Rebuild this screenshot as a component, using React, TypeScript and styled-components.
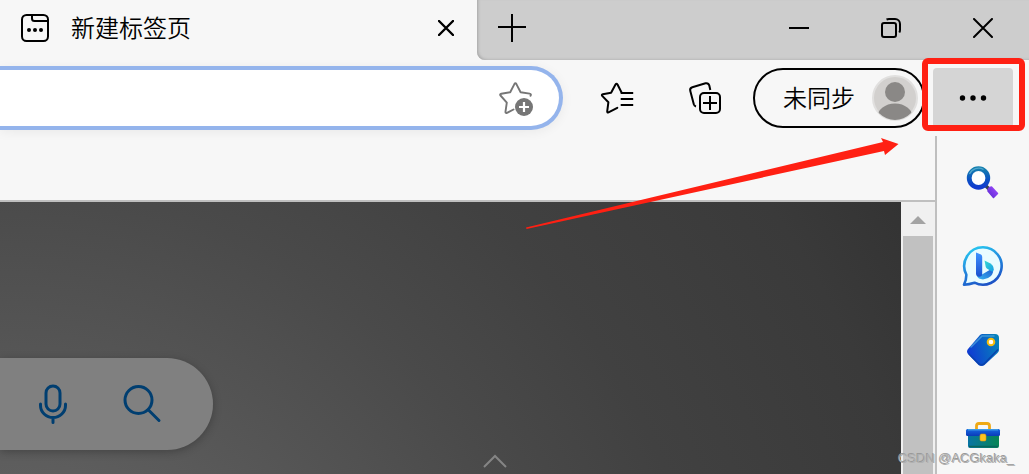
import React from "react";
import styled, { createGlobalStyle } from "styled-components";

const GlobalStyle = createGlobalStyle`
  * { box-sizing: border-box; }
  body { margin: 0; background: #f7f7f7; overflow: hidden; }
  button { font: inherit; color: inherit; background: none; border: 0; padding: 0; }
  svg { display: block; }
`;

const Browser = styled.div`
  position: relative;
  display: flex;
  flex-direction: column;
  height: 100vh;
  overflow: hidden;
  background: #f7f7f7;
  color: #000;
  font-family: "Noto Sans CJK SC", "Liberation Sans", sans-serif;
  font-size: 24px;
  font-weight: 350;
  line-height: 36px;
`;

const TabStrip = styled.header`
  display: flex;
  flex: none;
  height: 60px;
  background: #f7f7f7;
`;

const ActiveTab = styled.div`
  display: flex;
  align-items: center;
  flex: 0 1 477px;
  padding: 0 16px 4px 20px;
`;

const Label = styled.span`
  padding-bottom: 2px;
  white-space: nowrap;
`;

const TabTitle = styled(Label)`
  flex: 1;
  margin-left: 21px;
`;

const StripRest = styled.div`
  display: flex;
  align-items: center;
  flex: 1;
  padding: 0 0 4px 12px;
  background: #cdcdcd;
  border-bottom-left-radius: 8px;
  box-shadow: inset 2px -1px 3px -1px #a6a6a6;
`;

const WindowControls = styled.div`
  display: flex;
  margin-left: auto;
`;

const IconButton = styled.button<{ $width: number; $height?: number }>`
  display: flex;
  flex: none;
  align-items: center;
  justify-content: center;
  width: ${(p) => p.$width}px;
  height: ${(p) => p.$height ?? 46}px;
`;

const Toolbar = styled.div`
  display: flex;
  flex: none;
  align-items: center;
  height: 76px;
  padding-right: 16px;
`;

const AddressBar = styled.div`
  display: flex;
  align-items: center;
  flex: 1;
  height: 64px;
  padding-right: 21px;
  background: #fff;
  border: 4px solid #94b4ec;
  border-left: 0;
  border-radius: 0 32px 32px 0;
  box-shadow: 0 2px 12px rgba(0, 0, 0, 0.06);
`;

const AddressInput = styled.input`
  flex: 1;
  min-width: 0;
  height: 52px;
  padding: 0 20px;
  border: 0;
  outline: 0;
  background: transparent;
  font: inherit;
`;

const ToolbarActions = styled.div`
  display: flex;
  align-items: center;
  margin-left: 30px;
  gap: 40px;
`;

const ProfileButton = styled.button`
  display: flex;
  flex: none;
  align-items: center;
  justify-content: space-between;
  width: 172px;
  height: 60px;
  margin-left: 24px;
  padding: 0 5px 0 28px;
  border: 2px solid #000;
  border-radius: 30px;
`;

const MenuSlot = styled.div`
  position: relative;
  flex: none;
  margin-left: 8px;
`;

const MenuButton = styled(IconButton)`
  background: #d5d5d5;
  border-radius: 4px;
`;

const Highlight = styled.div`
  position: absolute;
  inset: -10px -12px -3px -11px;
  border: 6px solid #ff2013;
  border-radius: 6px;
  pointer-events: none;
`;

const Arrow = styled.svg`
  position: absolute;
  top: 136px;
  right: 129px;
  pointer-events: none;
`;

const Main = styled.div`
  display: flex;
  flex: 1;
  min-height: 0;
`;

const PageColumn = styled.div`
  display: flex;
  flex-direction: column;
  flex: 1;
  min-width: 0;
`;

const FavoritesBar = styled.div`
  flex: none;
  height: 66px;
  border-bottom: 2px solid #bfbfbf;
`;

const Viewport = styled.div`
  display: flex;
  flex: 1;
  min-height: 0;
`;

const NewTabPage = styled.main`
  display: flex;
  flex-direction: column;
  justify-content: space-between;
  flex: 1;
  padding-top: 156px;
  background: radial-gradient(circle at 0 200%, #5e5e5e 270px, #4a4a4a 560px, #414141 720px, #3a3a3a 940px, #333 1054px);
`;

const SearchBox = styled.form`
  display: flex;
  align-items: center;
  width: 213px;
  height: 92px;
  padding-left: 30px;
  gap: 43px;
  background: #808080;
  border-radius: 0 46px 46px 0;
  box-shadow: 0 2px 8px rgba(0, 0, 0, 0.25);
`;

const ExpandButton = styled.button`
  display: flex;
  align-self: center;
  margin-left: 88px;
  padding-bottom: 6px;
`;

const ScrollTrack = styled.div`
  display: flex;
  flex-direction: column;
  flex: none;
  width: 34px;
  padding: 0 2px;
  background: #f0f0f0;
`;

const ScrollUp = styled(IconButton)`
  padding-top: 2px;
`;

const ScrollThumb = styled.div`
  flex: 1;
  background: #c1c1c1;
`;

const Sidebar = styled.aside`
  display: flex;
  flex-direction: column;
  align-items: center;
  flex: none;
  width: 94px;
  padding-top: 4px;
  border-left: 2px solid #bfbfbf;
`;

const Watermark = styled.span`
  position: absolute;
  right: 14px;
  bottom: 7px;
  color: #b0b0b0;
  font-family: "Liberation Sans", Arial, sans-serif;
  font-size: 13px;
  font-weight: 400;
  line-height: 16px;
  text-shadow: -1px -1px 0 #999;
`;

const TabPageIcon = () => (
  <svg width="30" height="30" viewBox="0 0 30 30" fill="none" stroke="#000" strokeWidth="2">
    <rect x="2" y="2" width="26" height="26" rx="4.5" />
    <path d="M12 2v3.500a2.500 2.500 0 0 0 2.500 2.500H28" />
    <g fill="#000" stroke="none">
      <circle cx="9" cy="17" r="2" />
      <circle cx="15" cy="17" r="2" />
      <circle cx="21" cy="17" r="2" />
    </g>
  </svg>
);

const CloseIcon = ({ size, weight }: { size: number; weight: number }) => (
  <svg width={size} height={size} viewBox={`0 0 ${size} ${size}`} stroke="#000" strokeWidth={weight} strokeLinecap="round">
    <path d={`M1 1L${size - 1} ${size - 1}M${size - 1} 1L1 ${size - 1}`} />
  </svg>
);

const PlusIcon = () => (
  <svg width="28" height="28" viewBox="0 0 28 28" stroke="#000" strokeWidth="2">
    <path d="M14 0v28M0 13h28" />
  </svg>
);

const MinimizeIcon = () => (
  <svg width="20" height="20" viewBox="0 0 20 20" stroke="#000" strokeWidth="2">
    <path d="M0 10h20" />
  </svg>
);

const RestoreIcon = () => (
  <svg width="20" height="20" viewBox="0 0 20 20" fill="none" stroke="#000" strokeWidth="2">
    <rect x="1" y="5" width="14" height="14" rx="2" />
    <path d="M5.500 1.500Q6.500 1 8 1h6a5 5 0 0 1 5 5v6q0 1.500-.7 2.500" />
  </svg>
);

const AddFavoriteIcon = () => (
  <svg width="36" height="36" viewBox="0 0 36 36" fill="none">
    <path
      d="M15.500 29.500l-6.500 3.400q-1.700.6-1.500-1.300l1.300-9L2.500 15.500q-1-1.400.8-1.800l8.900-1.400 4.200-8.200q1-1.700 2 0l4.200 8.200 9 1.300q2 .4.900 2.200"
      stroke="#767676"
      strokeWidth="1.900"
      strokeLinejoin="round"
      strokeLinecap="round"
    />
    <circle cx="26" cy="27" r="9" fill="#767676" />
    <path d="M26 22v10M21 27h10" stroke="#fff" strokeWidth="2.200" />
  </svg>
);

const FavoritesIcon = () => (
  <svg width="34" height="34" viewBox="0 0 34 34" fill="none" stroke="#000" strokeWidth="2" strokeLinejoin="round" strokeLinecap="round">
    <path d="M17.300 26.800L8.500 31.400q-1.400.5-1.300-1l1.200-9.200-6.200-6.300q-.9-1.200.6-1.600l8.300-1.500L15.500 3.500q1-1.500 2 0l4.200 8.300" />
    <path d="M21.700 12h10.500M21.700 18h10.500M21.700 24h10.500" strokeLinecap="square" />
  </svg>
);

const CollectionsIcon = () => (
  <svg width="34" height="34" viewBox="0 0 34 34" fill="none" stroke="#000" strokeWidth="2">
    <rect x="12" y="12" width="20" height="20" rx="4" />
    <path d="M22 15v14M15 22h14" />
    <path d="M8 25.500q-1.700-.5-2.200-2.200L2.300 10q-.8-3 2-3.800L17.500 2.300q3-.6 3.800 2.200L22.300 9" />
  </svg>
);

const Avatar = () => (
  <svg width="46" height="46" viewBox="0 0 46 46">
    <defs>
      <clipPath id="avatar-clip">
        <circle cx="23" cy="23" r="22" />
      </clipPath>
    </defs>
    <circle cx="23" cy="23" r="22" fill="#d2d0ce" stroke="#e1e0df" strokeWidth="2" />
    <circle cx="23" cy="17" r="10" fill="#8a8886" />
    <ellipse cx="23" cy="43" rx="18" ry="14.500" fill="#8a8886" clipPath="url(#avatar-clip)" />
  </svg>
);

const MoreIcon = () => (
  <svg width="28" height="8" viewBox="0 0 28 8">
    <circle cx="3.500" cy="4" r="2.700" />
    <circle cx="14" cy="4" r="2.700" />
    <circle cx="24.500" cy="4" r="2.700" />
  </svg>
);

const MicIcon = () => (
  <svg width="46" height="42" viewBox="0 0 46 42" fill="none" stroke="#003e70" strokeWidth="3" strokeLinecap="round">
    <rect x="16" y="3" width="14" height="25" rx="7" />
    <path d="M10.500 21v1.500a12.500 12 0 0 0 25 0V21M23 35.500v4" />
  </svg>
);

const SearchIcon = () => (
  <svg width="40" height="42" viewBox="0 0 40 42" fill="none" stroke="#003e70" strokeWidth="3" strokeLinecap="round">
    <circle cx="16.500" cy="17" r="13.500" />
    <path d="M26.500 27l10.500 10.500" />
  </svg>
);

const SideSearchIcon = () => (
  <svg width="42" height="42" viewBox="0 0 42 42">
    <defs>
      <linearGradient id="lens" x1="0" y1="0" x2="0" y2="1">
        <stop offset="0" stopColor="#157fae" />
        <stop offset=".6" stopColor="#0b50c4" />
        <stop offset="1" stopColor="#123ccf" />
      </linearGradient>
      <linearGradient id="handle" x1="0" y1="1" x2="1" y2="0">
        <stop offset="0" stopColor="#5a28d0" />
        <stop offset="1" stopColor="#a04cff" />
      </linearGradient>
    </defs>
    <path d="M24 25l4 4" stroke="#34405c" strokeWidth="3.500" />
    <circle cx="16.500" cy="17" r="9.300" fill="#fff" stroke="url(#lens)" strokeWidth="4.800" />
    <path d="M7.500 13a10 10 0 0 1 14-4.500" fill="none" stroke="#51a7ce" strokeWidth="1.200" />
    <path d="M26 30q0-3.500 3.500-4l6 6.500-4 4z" fill="url(#handle)" stroke="url(#handle)" strokeWidth="1.500" strokeLinejoin="round" />
  </svg>
);

const BingIcon = () => (
  <svg width="42" height="42" viewBox="0 0 42 42">
    <defs>
      <linearGradient id="bubble" x1=".3" y1="0" x2=".7" y2="1">
        <stop offset="0" stopColor="#28c4ef" />
        <stop offset=".5" stopColor="#2284dc" />
        <stop offset="1" stopColor="#1c4fc4" />
      </linearGradient>
      <linearGradient id="stem" x1="0" y1="0" x2="0" y2="1">
        <stop offset="0" stopColor="#3e93ff" />
        <stop offset="1" stopColor="#1851cf" />
      </linearGradient>
      <linearGradient id="bowl" x1="0" y1="1" x2="1" y2="0">
        <stop offset="0" stopColor="#38b6f0" />
        <stop offset="1" stopColor="#1d58d0" />
      </linearGradient>
      <linearGradient id="wing" x1="0" y1="0" x2="1" y2="1">
        <stop offset="0" stopColor="#38d9d0" />
        <stop offset="1" stopColor="#159ee6" />
      </linearGradient>
    </defs>
    <path d="M21 2.300A18.700 18.700 0 1 1 12.500 37.700Q7 39.500 2 39.700 4.500 35 4.300 29.500A18.700 18.700 0 0 1 21 2.300z" fill="#e9fcff" stroke="url(#bubble)" strokeWidth="2.600" strokeLinejoin="round" />
    <path d="M15 31q1 3 6 3.500 5-.5 8-3.500 3-3.500 2-8l-11 6.500z" fill="url(#bowl)" />
    <path d="M14 7.500l5 2q1.200.8 1.200 2.500v17q0 2.800-3 2.800t-3.200-3z" fill="url(#stem)" />
    <path d="M22.500 15.500l5.500 2.700q3.700 2 3.700 6.200l-1 2.600-5.500-3.200q-1-.7-1.500-2z" fill="url(#wing)" />
  </svg>
);

const TagIcon = () => (
  <svg width="42" height="42" viewBox="0 0 42 42">
    <defs>
      <linearGradient id="tag" x1="0" y1=".6" x2="1" y2=".3">
        <stop offset="0" stopColor="#1038d4" />
        <stop offset="1" stopColor="#0782ba" />
      </linearGradient>
    </defs>
    <path d="M20.500 5h12.500q4 0 4 4v12q0 1.500-1.500 3L22.500 36q-3 2-6 0L6 25q-2-2.500 0-5L18 6q1-1 2.500-1z" fill="url(#tag)" />
    <path d="M9 18L20 7h12" fill="none" stroke="#51a9df" strokeWidth="1.600" strokeLinecap="round" opacity=".7" />
    <path d="M36 20.500L22 35q-2.500 1.500-5 0L7 25" fill="none" stroke="#0a42ac" strokeWidth="1.500" />
    <circle cx="29" cy="13" r="3.300" fill="#fff" stroke="#f6bd0b" strokeWidth="2" />
  </svg>
);

const ToolboxIcon = () => (
  <svg width="42" height="42" viewBox="0 0 42 42">
    <defs>
      <linearGradient id="box">
        <stop offset="0" stopColor="#0874a5" />
        <stop offset="1" stopColor="#078554" />
      </linearGradient>
      <linearGradient id="lid" x1="0" y1="0" x2="0" y2="1">
        <stop offset="0" stopColor="#1768e2" />
        <stop offset="1" stopColor="#0a3bb8" />
      </linearGradient>
    </defs>
    <path d="M14.500 17v-4q0-2.500 2.500-2.500h8q2.500 0 2.500 2.500v4" fill="none" stroke="#efa914" strokeWidth="2.800" />
    <path d="M6 21h31v12q0 2-2 2H8q-2 0-2-2z" fill="url(#box)" />
    <path d="M7 33.500h29" stroke="#08655c" strokeWidth="1.500" />
    <rect x="4" y="16" width="34" height="7" rx="1.500" fill="url(#lid)" />
    <path d="M6 16.800h30" stroke="#46a8e6" strokeWidth="1.200" />
    <rect x="18" y="21" width="6" height="7" rx="1.500" fill="#ffc31f" stroke="#d99713" strokeWidth=".6" />
  </svg>
);

const sidebarItems = [
  { label: "搜索", Icon: SideSearchIcon },
  { label: "Bing", Icon: BingIcon },
  { label: "购物", Icon: TagIcon },
  { label: "工具", Icon: ToolboxIcon },
];

export default function App() {
  return (
    <Browser>
      <GlobalStyle />
      <TabStrip>
        <ActiveTab>
          <TabPageIcon />
          <TabTitle>新建标签页</TabTitle>
          <IconButton $width={30} $height={30} aria-label="关闭标签页">
            <CloseIcon size={16} weight={2.4} />
          </IconButton>
        </ActiveTab>
        <StripRest>
          <IconButton $width={46} aria-label="新建标签页">
            <PlusIcon />
          </IconButton>
          <WindowControls>
            <IconButton $width={92} aria-label="最小化"><MinimizeIcon /></IconButton>
            <IconButton $width={92} aria-label="还原"><RestoreIcon /></IconButton>
            <IconButton $width={92} aria-label="关闭"><CloseIcon size={20} weight={2} /></IconButton>
          </WindowControls>
        </StripRest>
      </TabStrip>

      <Toolbar>
        <AddressBar>
          <AddressInput aria-label="地址栏" />
          <IconButton $width={44} aria-label="收藏此页">
            <AddFavoriteIcon />
          </IconButton>
        </AddressBar>
        <ToolbarActions>
          <IconButton $width={48} aria-label="收藏夹"><FavoritesIcon /></IconButton>
          <IconButton $width={48} aria-label="集锦"><CollectionsIcon /></IconButton>
        </ToolbarActions>
        <ProfileButton>
          <Label>未同步</Label>
          <Avatar />
        </ProfileButton>
        <MenuSlot>
          <MenuButton $width={80} $height={60} aria-label="设置及其他">
            <MoreIcon />
          </MenuButton>
          <Highlight />
        </MenuSlot>
      </Toolbar>

      <Main>
        <PageColumn>
          <FavoritesBar />
          <Viewport>
            <NewTabPage>
              <SearchBox>
                <IconButton type="button" $width={46} aria-label="语音搜索"><MicIcon /></IconButton>
                <IconButton type="submit" $width={46} aria-label="搜索"><SearchIcon /></IconButton>
              </SearchBox>
              <ExpandButton aria-label="展开">
                <svg width="24" height="14" viewBox="0 0 24 14" fill="none" stroke="#858585" strokeWidth="2">
                  <path d="M1 13L12 2l11 11" />
                </svg>
              </ExpandButton>
            </NewTabPage>
            <ScrollTrack>
              <ScrollUp $width={30} $height={34} aria-label="向上滚动">
                <svg width="16" height="8" viewBox="0 0 16 8" fill="#a3a3a3"><path d="M0 8l8-8 8 8z" /></svg>
              </ScrollUp>
              <ScrollThumb />
            </ScrollTrack>
          </Viewport>
        </PageColumn>
        <Sidebar>
          {sidebarItems.map(({ label, Icon }) => (
            <IconButton key={label} $width={84} $height={84} aria-label={label}>
              <Icon />
            </IconButton>
          ))}
        </Sidebar>
      </Main>

      <Arrow width="374" height="94" viewBox="0 0 374 94" fill="#ff2013">
        <path d="M0 91.500L357 6 355 2l17.500 6L359 19l-1-4L.5 93z" />
      </Arrow>
      <Watermark>CSDN @ACGkaka_</Watermark>
    </Browser>
  );
}
